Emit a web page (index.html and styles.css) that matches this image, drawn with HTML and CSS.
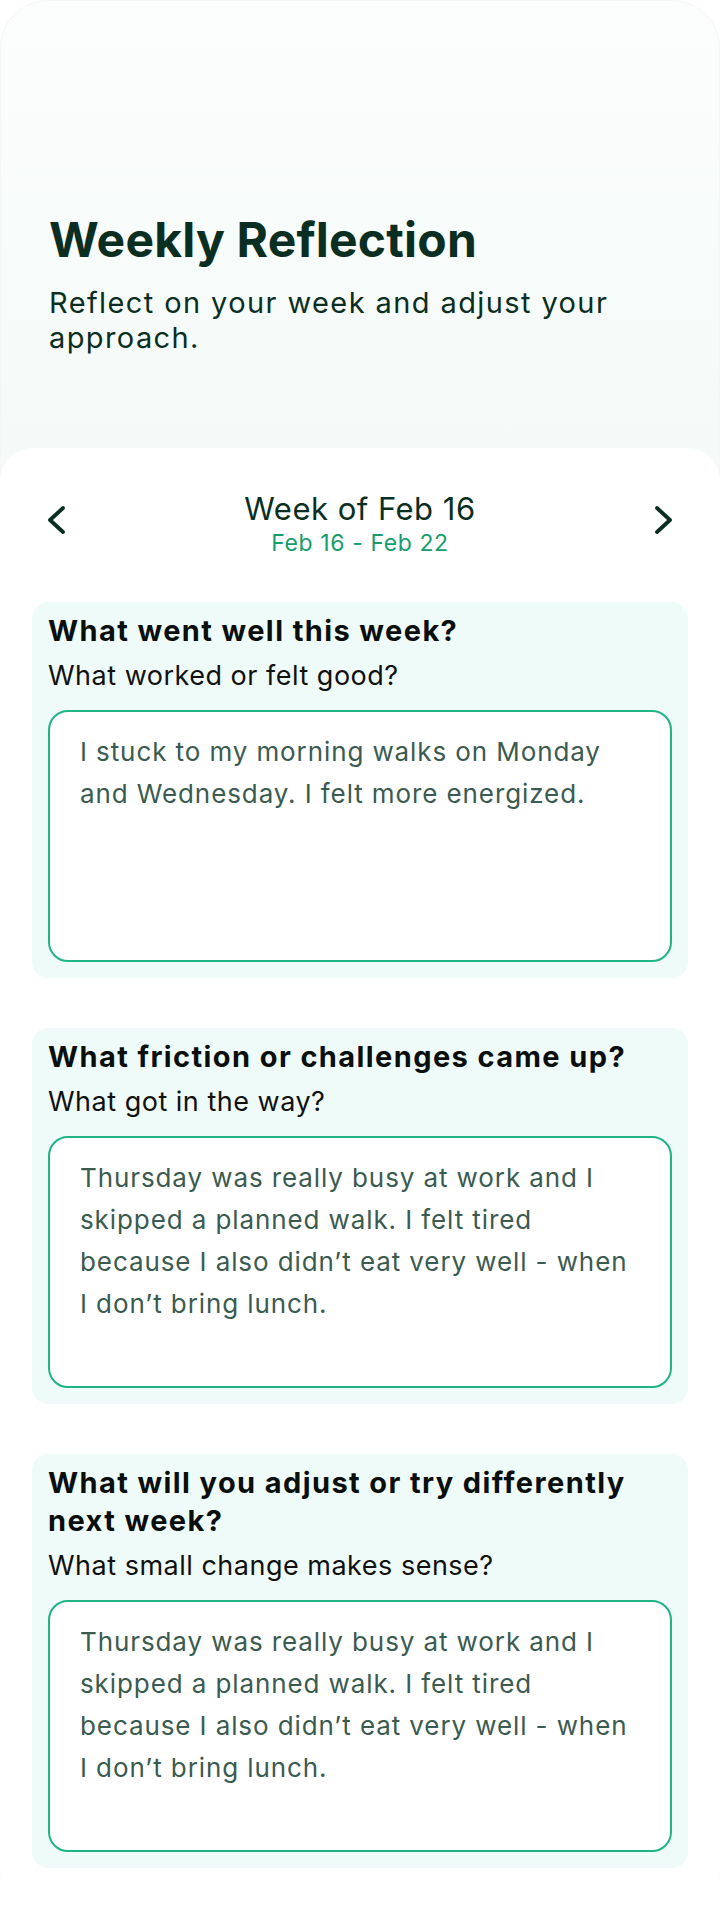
FILE: index.html
```html
<!DOCTYPE html>
<html lang="en">
<head>
    <meta charset="UTF-8">
    <meta name="viewport" content="width=device-width, initial-scale=1.0">
    <title>Weekly Reflection</title>
    <link rel="stylesheet" href="styles.css">
</head>
<body>
    <div class="screen">
        <!-- Page header -->
        <header class="page-header">
            <h1>Weekly Reflection</h1>
            <p>Reflect on your week and adjust your approach.</p>
        </header>

        <main class="sheet">
            <!-- Week switcher -->
            <div class="week-nav">
                <button class="nav-btn" aria-label="Previous week">
                    <svg width="20" height="30" viewBox="0 0 20 30" fill="none">
                        <path d="M17 3 L4 15 L17 27" stroke="currentColor" stroke-width="3.8" stroke-linecap="round" stroke-linejoin="round"/>
                    </svg>
                </button>
                <div class="week-label">
                    <h2>Week of Feb 16</h2>
                    <span class="week-range">Feb 16 - Feb 22</span>
                </div>
                <button class="nav-btn" aria-label="Next week">
                    <svg width="20" height="30" viewBox="0 0 20 30" fill="none">
                        <path d="M3 3 L16 15 L3 27" stroke="currentColor" stroke-width="3.8" stroke-linecap="round" stroke-linejoin="round"/>
                    </svg>
                </button>
            </div>

            <!-- Reflection questions -->
            <section class="question">
                <h3>What went well this week?</h3>
                <p>What worked or felt good?</p>
                <textarea rows="5">I stuck to my morning walks on Monday and Wednesday. I felt more energized.</textarea>
            </section>

            <section class="question">
                <h3>What friction or challenges came up?</h3>
                <p>What got in the way?</p>
                <textarea rows="5">Thursday was really busy at work and I skipped a planned walk. I felt tired because I also didn’t eat very well - when I don’t bring lunch.</textarea>
            </section>

            <section class="question">
                <h3>What will you adjust or try differently next week?</h3>
                <p>What small change makes sense?</p>
                <textarea rows="5">Thursday was really busy at work and I skipped a planned walk. I felt tired because I also didn’t eat very well - when I don’t bring lunch.</textarea>
            </section>
        </main>
    </div>
</body>
</html>
```

FILE: styles.css
```css
/* Base */
body {
    font-family: 'Inter', 'Noto Sans', sans-serif;
    background-color: #fff;
    color: #0b2e22;
    margin: 0;
    padding: 0;
}

.screen {
    min-height: 1918px;
    border-radius: 48px;
    overflow: hidden;
    background: linear-gradient(180deg, #fcfdfd 0%, #f3faf7 480px);
    box-shadow: inset 0 0 0 1px #f5f6f6;
}

/* Header */
.page-header {
    padding: 211px 49px 0;
    height: 237px;
}

.page-header h1 {
    font-size: 48px;
    line-height: 58px;
    font-weight: 700;
    letter-spacing: 0.2px;
    margin: 0;
}

.page-header p {
    font-size: 29px;
    line-height: 35px;
    letter-spacing: 1.4px;
    margin: 16px 0 0;
    max-width: 620px;
}

/* White sheet */
.sheet {
    background-color: #fff;
    border-radius: 32px 32px 0 0;
    padding: 43px 32px 50px;
}

.week-nav {
    display: flex;
    justify-content: space-between;
    align-items: center;
    padding: 0 14px;
}

.nav-btn {
    background: none;
    border: none;
    padding: 0;
    color: #0b2e22;
    display: flex;
    margin-bottom: 8px;
    cursor: pointer;
}

.week-label {
    text-align: center;
}

.week-label h2 {
    font-size: 31px;
    line-height: 36px;
    font-weight: 400;
    letter-spacing: 0.5px;
    margin: 0;
}

.week-range {
    display: block;
    margin-top: 3px;
    font-size: 23px;
    line-height: 26px;
    letter-spacing: 0.6px;
    color: #179d6d;
}

/* Question cards */
.question {
    background-color: #effbf8;
    border-radius: 16px;
    padding: 10px 16px 16px;
    margin-top: 46px;
}

.question + .question {
    margin-top: 50px;
}

.question h3 {
    font-size: 29px;
    line-height: 38px;
    font-weight: 700;
    letter-spacing: 1.4px;
    color: #0a0f0d;
    margin: 0;
}

.question p {
    font-size: 27px;
    line-height: 36px;
    letter-spacing: 0.5px;
    color: #111;
    margin: 8px 0 0;
}

.question textarea {
    display: block;
    box-sizing: border-box;
    width: 100%;
    height: 252px;
    margin-top: 16px;
    padding: 19px 30px;
    border: 2px solid #1fb386;
    border-radius: 20px;
    background-color: #fff;
    font-family: inherit;
    font-size: 26px;
    line-height: 42px;
    letter-spacing: 0.9px;
    color: #3b5b50;
    resize: none;
    outline: none;
}
```
